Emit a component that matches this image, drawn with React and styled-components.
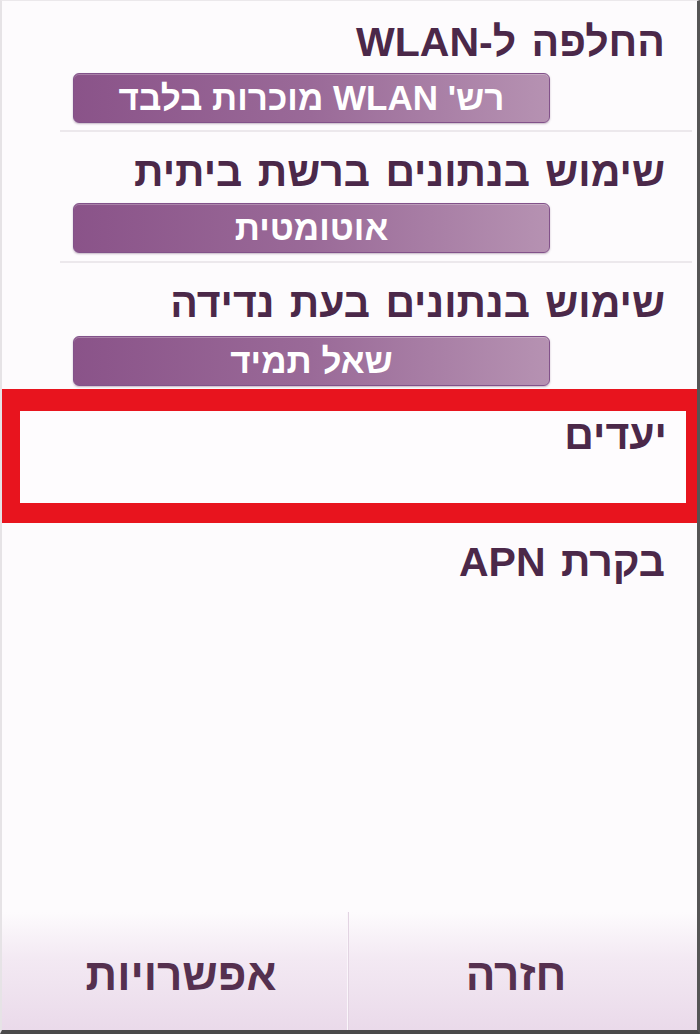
import React from "react";
import styled, { createGlobalStyle } from "styled-components";

const settings = [
  { title: "החלפה ל-WLAN", value: "רש' WLAN מוכרות בלבד", top: 17, gap: 7, after: 7 },
  { title: "שימוש בנתונים ברשת ביתית", value: "אוטומטית", top: 16, gap: 7, after: 8 },
  { title: "שימוש בנתונים בעת נדידה", value: "שאל תמיד", top: 16, gap: 9, after: 3 },
];

const GlobalStyle = createGlobalStyle`
  html, body {
    margin: 0;
    padding: 0;
    background: #fdfbfd;
  }
`;

const Screen = styled.div`
  width: 700px;
  height: 1034px;
  box-sizing: border-box;
  display: flex;
  flex-direction: column;
  direction: rtl;
  background: #fdfbfd;
  border-top: 1px solid #ebe8eb;
  border-left: 2px solid #e6e3e6;
  border-right: 3px solid #555;
  border-bottom: 4px solid #4a4a4a;
  font-family: "Liberation Sans", "DejaVu Sans", sans-serif;
  overflow: hidden;
`;

const List = styled.div`
  flex: 1;
  display: flex;
  flex-direction: column;
`;

const SettingRow = styled.div`
  display: flex;
  flex-direction: column;
  padding-top: ${(p) => p.$top}px;
`;

const Title = styled.div`
  padding-right: 32px;
  font-size: 41px;
  line-height: 48px;
  font-weight: bold;
  word-spacing: 4px;
  color: #4b2849;
  white-space: nowrap;
`;

const ValueButton = styled.div`
  margin-top: ${(p) => p.$gap}px;
  margin-right: 147px;
  width: 477px;
  height: 50px;
  box-sizing: border-box;
  border-radius: 6px;
  border: 1px solid #82528a;
  background: linear-gradient(90deg, #8a5389 0%, #9a6a98 50%, #b692b2 100%);
  box-shadow: inset 0 1px 0 rgba(255, 255, 255, 0.25), 0 1px 2px rgba(90, 50, 90, 0.35);
  display: flex;
  align-items: center;
  justify-content: center;
  color: #fff;
  font-size: 35px;
  font-weight: bold;
  white-space: nowrap;
`;

const Divider = styled.div`
  height: 2px;
  margin: ${(p) => p.$top}px 5px 0 58px;
  background: #ece8ec;
`;

const Highlight = styled.div`
  margin-top: ${(p) => p.$top}px;
  height: 134px;
  box-sizing: border-box;
  border-style: solid;
  border-color: #e8141e;
  border-width: 22px 12px 20px 20px;
  margin-left: -2px;
  margin-right: -1px;
  background: #fefcfe;
`;

const PlainTitle = styled(Title)`
  padding-top: ${(p) => p.$top}px;
  padding-right: ${(p) => p.$right}px;
`;

const SoftKeys = styled.div`
  height: 118px;
  display: flex;
  padding: 0 14px 0 12px;
  background: linear-gradient(180deg, #fdfbfd 0%, #f3e9f3 40%, #eadaea 100%);
`;

const SoftKey = styled.div`
  flex: 1;
  display: flex;
  align-items: center;
  justify-content: center;
  padding-top: 8px;
  font-size: 44px;
  font-weight: bold;
  color: #55304f;
  & + & {
    border-right: 1px solid #e2d4e2;
    box-shadow: inset -1px 0 0 #fbf6fb;
  }
`;

export default function App() {
  return (
    <>
      <GlobalStyle />
      <Screen>
        <List>
          {settings.map((s, i) => (
            <React.Fragment key={s.title}>
              <SettingRow $top={s.top}>
                <Title>{s.title}</Title>
                <ValueButton $gap={s.gap}>{s.value}</ValueButton>
              </SettingRow>
              {i < settings.length - 1 && <Divider $top={s.after} />}
            </React.Fragment>
          ))}
          <Highlight $top={settings[settings.length - 1].after}>
            <PlainTitle $top={0} $right={19}>יעדים</PlainTitle>
          </Highlight>
          <PlainTitle $top={15} $right={32}>בקרת APN</PlainTitle>
        </List>
        <SoftKeys>
          <SoftKey>חזרה</SoftKey>
          <SoftKey>אפשרויות</SoftKey>
        </SoftKeys>
      </Screen>
    </>
  );
}
